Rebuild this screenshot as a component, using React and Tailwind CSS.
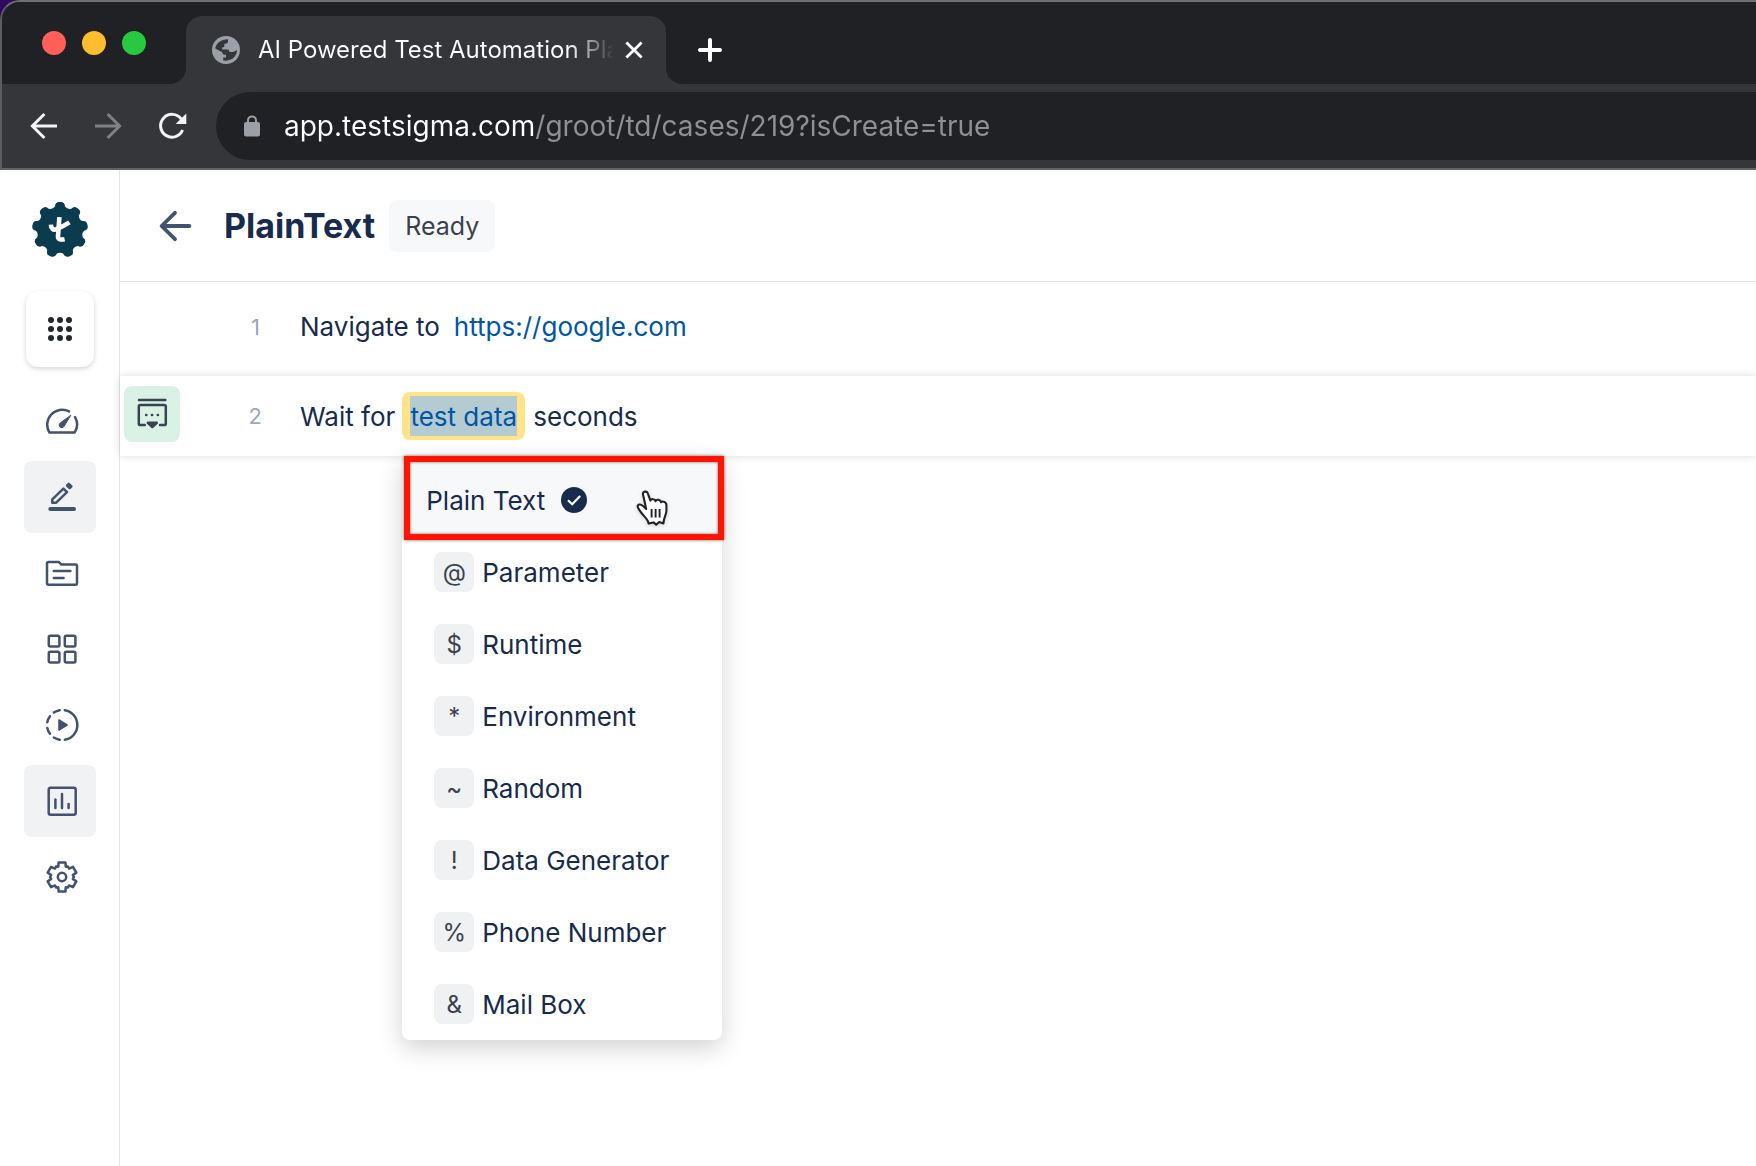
import React from "react";

const polar = (c, r, deg) => {
  const a = ((deg - 90) * Math.PI) / 180;
  return `${(c + r * Math.cos(a)).toFixed(2)} ${(c + r * Math.sin(a)).toFixed(2)}`;
};

// Nine round-tipped lobes joined by smooth valleys
const badgePath =
  "M" +
  Array.from({ length: 9 }, (_, i) => {
    const t = i * 40;
    return `${polar(28, 24, t - 12)} Q${polar(28, 28.6, t - 10)} ${polar(28, 28, t)} Q${polar(28, 28.6, t + 10)} ${polar(28, 24, t + 12)} Q${polar(28, 21.6, t + 20)} ${polar(28, 24, t + 28)}`;
  }).join("L") +
  "Z";

// Six-toothed gear outline
const gearPath =
  "M" +
  [0, 60, 120, 180, 240, 300]
    .flatMap((t) => [
      polar(18, 11, t - 20),
      polar(18, 15, t - 13),
      polar(18, 15, t + 13),
      polar(18, 11, t + 20),
      polar(18, 12, t + 30),
    ])
    .join("L") +
  "Z";

function Icon({ children, className = "" }) {
  return (
    <svg
      viewBox="0 0 36 36"
      className={`size-9 shrink-0 ${className}`}
      fill="none"
      stroke="currentColor"
      strokeWidth="2.5"
      strokeLinecap="round"
      strokeLinejoin="round"
      aria-hidden="true"
    >
      {children}
    </svg>
  );
}

const navItems = [
  {
    label: "Dashboard",
    icon: (
      <>
        <path d="M25 8.4A15 15 0 0 0 5.3 29.4H30.7A15 15 0 0 0 31 14" />
        <path d="M26.6 12.6 20 23.4a2.6 2.6 0 1 1-3.8-3.4z" fill="currentColor" strokeWidth="1" />
      </>
    ),
  },
  {
    label: "Create tests",
    active: true,
    icon: (
      <>
        <path d="M6.3 30H30" strokeWidth="4" />
        <path d="M8.3 23.8V20.4L19.4 9.6 23 13.1 11.9 23.8Z" />
        <path d="M24.8 4.8 27.4 7.3 25.7 9 23.1 6.5Z" fill="currentColor" />
      </>
    ),
  },
  {
    label: "Projects",
    icon: (
      <>
        <path d="M4.5 6.9H14.8L17.2 9.5H31.5Q33 9.5 33 11V28.3Q33 29.8 31.5 29.8H4.5Q3 29.8 3 28.3V8.4Q3 6.9 4.5 6.9Z" />
        <path d="M9.8 16H26.4M9.8 23H19.6" />
      </>
    ),
  },
  {
    label: "Add-ons",
    icon: (
      <>
        <rect x="4.8" y="4.8" width="10.6" height="10.6" rx="1.5" />
        <rect x="20.8" y="4.8" width="10.6" height="10.6" rx="1.5" />
        <rect x="4.8" y="20.8" width="10.6" height="10.6" rx="1.5" />
        <rect x="20.8" y="20.8" width="10.6" height="10.6" rx="1.5" />
      </>
    ),
  },
  {
    label: "Test plans",
    icon: (
      <>
        <path d="M20.8 3.2A15 15 0 0 1 20.8 32.8M15.7 3.2A15 15 0 0 0 9.8 5.5M6 9.2A15 15 0 0 0 3.3 15.2M3.3 21A15 15 0 0 0 6 26.8M9.8 30.5A15 15 0 0 0 15.7 32.8" />
        <path d="M15 13V23L23 18Z" fill="currentColor" strokeWidth="1.6" />
      </>
    ),
  },
  {
    label: "Reports",
    active: true,
    icon: (
      <>
        <rect x="4.7" y="4.7" width="27" height="27" rx="2" />
        <path d="M11.4 16.5V25M18 11V25M24.6 21V25" />
      </>
    ),
  },
  {
    label: "Settings",
    icon: (
      <>
        <path d={gearPath} />
        <circle cx="18" cy="18" r="4.2" />
      </>
    ),
  },
];

const dataTypes = [
  ["@", "Parameter"],
  ["$", "Runtime"],
  ["*", "Environment"],
  ["~", "Random"],
  ["!", "Data Generator"],
  ["%", "Phone Number"],
  ["&", "Mail Box"],
];

function BrowserChrome() {
  return (
    <div className="bg-[#2f0a5f]">
      <header className="overflow-hidden rounded-tl-[20px] border-y-2 border-l-2 border-t-[#6f7072] border-b-[#636468] border-l-[#5c5d60] bg-[#35363a]">
        <div className="flex h-[82px] items-stretch bg-[#35363a]">
          <div className="flex w-[184px] shrink-0 items-start gap-4 rounded-br-2xl bg-[#202124] pt-[29px] pl-10">
            <button aria-label="Close window" className="size-6 rounded-full bg-[#ff5f57]" />
            <button aria-label="Minimize window" className="size-6 rounded-full bg-[#febc2e]" />
            <button aria-label="Zoom window" className="size-6 rounded-full bg-[#28c840]" />
          </div>
          <div className="w-[480px] shrink-0 bg-[#202124]">
            <div className="h-[14px]" />
            <div className="flex h-[68px] items-center rounded-t-2xl bg-[#35363a] pl-[26px]">
              <svg viewBox="0 0 28 28" className="size-7 shrink-0" aria-hidden="true">
                <circle cx="14" cy="14" r="14" fill="#9aa0a6" />
                <path
                  d="M3.2 12.6C4 7.6 8.6 3.2 16 3.2V5.4C16 7 14.6 7.6 12.4 7.8V10C12.4 11 11.6 11.2 10.2 11.2V13.4H15.4C17 13.4 17.4 14.4 17.4 16H20C21.4 16 22.6 15.4 25 14C24.8 20.6 19.4 25.4 11.2 24.6V21.4H14V18.8C11.6 18.8 10.2 17.8 10.2 16.2Z"
                  fill="#35363a"
                />
              </svg>
              <span className="ml-[18px] w-[360px] bg-linear-to-r from-white from-[310px] to-transparent to-[356px] bg-clip-text text-2xl whitespace-nowrap text-transparent">
                AI Powered Test Automation Pla
              </span>
              <button aria-label="Close tab" className="ml-1.5 text-white">
                <svg viewBox="0 0 20 20" className="size-5" fill="none" stroke="currentColor" strokeWidth="2.8">
                  <path d="M2.4 2.4 17.6 17.6M17.6 2.4 2.4 17.6" />
                </svg>
              </button>
            </div>
          </div>
          <div className="flex flex-1 items-center rounded-bl-2xl bg-[#202124] pt-[14px] pl-8">
            <button aria-label="New tab" className="text-white">
              <svg viewBox="0 0 24 24" className="size-6" fill="none" stroke="currentColor" strokeWidth="4" strokeLinecap="round">
                <path d="M2 12H22M12 2V22" />
              </svg>
            </button>
          </div>
        </div>
        <div className="flex h-[84px] items-center pl-[27px]">
          <button aria-label="Back" className="text-[#f1f3f4]">
            <svg viewBox="0 0 30 30" className="size-[30px]" fill="none" stroke="currentColor" strokeWidth="3">
              <path d="M28 15H4M15.4 3 3.4 15l12 12" />
            </svg>
          </button>
          <button aria-label="Forward" className="ml-[34px] text-[#808184]">
            <svg viewBox="0 0 30 30" className="size-[30px]" fill="none" stroke="currentColor" strokeWidth="3">
              <path d="M2 15H26M14.6 3l12 12-12 12" />
            </svg>
          </button>
          <button aria-label="Reload" className="ml-[34px] text-[#f1f3f4]">
            <svg viewBox="0 0 30 30" className="size-[30px]" fill="none" stroke="currentColor" strokeWidth="3">
              <path d="M25.6 19A11.4 11.4 0 1 1 24.2 8" />
              <path d="M18.6 13H29.3V2.4Z" fill="currentColor" stroke="none" />
            </svg>
          </button>
          <div className="-mr-9 ml-[29px] flex h-[68px] flex-1 items-center rounded-full bg-[#202124] pl-7">
            <svg viewBox="0 0 16 22" className="h-[22px] w-4 shrink-0" aria-hidden="true">
              <rect y="7" width="16" height="14.5" rx="2" fill="#9aa0a6" />
              <path d="M4 8V5.4a4 4 0 0 1 8 0V8" fill="none" stroke="#9aa0a6" strokeWidth="2" />
            </svg>
            <input
              aria-label="Address"
              readOnly
              value="app.testsigma.com/groot/td/cases/219?isCreate=true"
              className="ml-6 flex-1 bg-linear-to-r from-white from-[251px] to-[#8f9092] to-[251px] bg-clip-text text-[28px] text-transparent outline-none"
            />
          </div>
        </div>
      </header>
    </div>
  );
}

function Sidebar() {
  return (
    <nav aria-label="Main" className="flex w-[120px] shrink-0 flex-col items-center border-r border-[#e6e7ea] pt-8">
      <a href="#home" aria-label="Home">
        <svg viewBox="0 0 56 56" className="size-14" aria-hidden="true">
          <path d={badgePath} fill="#0b3b4e" />
          <g fill="none" stroke="#fff" strokeWidth="4.6" strokeLinejoin="round">
            <path d="M27.4 15.2 26 34.4Q25.8 38.6 32.6 37.2" />
            <path d="M18.8 22.6Q19.4 29 24.4 27.2 31 24.6 37.4 20.4" />
          </g>
        </svg>
      </a>
      <button
        aria-label="Apps"
        className="mt-[33px] flex h-[76px] w-[68px] items-center justify-center rounded-xl bg-white shadow-[0_2px_5px_rgba(0,0,0,0.16)]"
      >
        <svg viewBox="0 0 24 24" className="size-6" fill="#22272f" aria-hidden="true">
          {[3, 12, 21].flatMap((y) => [3, 12, 21].map((x) => <circle key={`${x}-${y}`} cx={x} cy={y} r="3" />))}
        </svg>
      </button>
      <ul className="mt-[18px] flex flex-col gap-1">
        {navItems.map((item) => (
          <li key={item.label}>
            <button
              aria-label={item.label}
              className={`flex size-[72px] items-center justify-center rounded-lg pl-1 text-[#43526f] ${
                item.active ? "bg-[#f1f2f4]" : ""
              }`}
            >
              <Icon>{item.icon}</Icon>
            </button>
          </li>
        ))}
      </ul>
    </nav>
  );
}

function HandCursor() {
  return (
    <svg viewBox="0 0 34 38" className="absolute top-7 right-12 h-[38px] w-[34px] drop-shadow-sm" aria-hidden="true">
      <path
        d="M7 4.6C6.2 1.2 11 .4 12 3.8L14.4 10.6C14.8 8.6 19 8.6 19.6 11.2 20.4 9 24.4 9.4 25 12.2 26.4 10.8 30.4 11.8 30.4 15.2V21C30.4 24.6 27.6 27.6 27.4 33.4L23.2 32 20.2 34.6 17.6 32.4 12.6 33.6C12 28.6 7.4 26.4 3.6 20.4 1.6 17.6 1 15.6 2.4 14.8 4.4 13.8 6.6 15 10.2 19Z"
        fill="#fff"
        stroke="#222"
        strokeWidth="2.1"
        strokeLinejoin="round"
      />
      <path d="M15.6 19V27.4M19.6 19V27.4M23.6 19V27.4" stroke="#222" strokeWidth="1.9" />
    </svg>
  );
}

function DataTypeMenu() {
  return (
    <div
      role="menu"
      className="absolute top-full left-0 z-10 mt-4 w-80 rounded-lg bg-white text-[#172b4d] shadow-[0_8px_24px_rgba(0,0,0,0.18)]"
    >
      <div className="relative left-0.5 flex h-[84px] w-80 items-center border-6 border-[#ff1500] bg-[#f7f8fa] pt-1 shadow-[0_0_3px_rgba(0,0,0,0.6),inset_0_0_3px_rgba(0,0,0,0.6)]">
        <button role="menuitem" className="flex flex-1 items-center gap-4 pl-4">
          <span className="pt-0.5">Plain Text</span>
          <svg viewBox="0 0 26 26" className="size-[26px]" aria-hidden="true">
            <circle cx="13" cy="13" r="13" fill="#172b4d" />
            <path d="M7 13.2 11.2 17.2 19.2 9" fill="none" stroke="#fff" strokeWidth="2.2" />
          </svg>
        </button>
        <HandCursor />
      </div>
      <ul className="-mt-1">
        {dataTypes.map(([symbol, name]) => (
          <li key={name}>
            <button role="menuitem" className="flex h-[72px] w-full items-center gap-2 pl-8">
              <span className="flex size-10 items-center justify-center rounded-lg bg-[#eff1f3] pt-0.5 text-2xl text-[#3b424d]">
                {symbol}
              </span>
              <span className="pt-0.5">{name}</span>
            </button>
          </li>
        ))}
      </ul>
    </div>
  );
}

export default function App() {
  return (
    <div className="flex min-h-screen flex-col overflow-x-hidden bg-white font-['Inter',sans-serif] text-[26px] leading-8 text-[#172b4d]">
      <BrowserChrome />
      <div className="flex flex-1">
        <Sidebar />
        <main className="min-w-0 flex-1">
          <div className="flex h-28 items-center border-b border-[#e4e6ea] pl-[38px]">
            <a href="#back" aria-label="Back to test cases" className="text-[#43526f]">
              <Icon>
                <path d="M4 18H31.4M17 4.8 3.6 18 17 31.2" strokeWidth="3.8" />
              </Icon>
            </a>
            <h1 className="ml-[30px] text-[34px] font-bold text-[#172b4d]">PlainText</h1>
            <span className="ml-[14px] flex h-[52px] items-center rounded-lg bg-[#f7f8fa] px-4 text-[25px] text-[#3b424d]">
              Ready
            </span>
          </div>
          <ol>
            <li className="flex h-[94px] items-center pb-1">
              <span className="w-[60px] shrink-0" />
              <span className="w-[120px] pr-10 text-right text-[22px] text-[#9ba7ba]">1</span>
              <span>Navigate to</span>
              <a href="#url" className="ml-[14px] text-[#0055a5]">
                https://google.com
              </a>
            </li>
            <li className="relative flex h-20 items-center shadow-[0_0_8px_rgba(0,0,0,0.14)]">
              <button
                aria-label="Step details"
                className="mb-1 ml-1 flex size-14 shrink-0 items-center justify-center rounded-lg bg-[#daf2e5] text-[#3b4252]"
              >
                <Icon>
                  <path d="M5 4H31.4" />
                  <path d="M10.8 29H6.4Q4.8 29 4.8 27.4V10.6Q4.8 9 6.4 9H30.2Q31.8 9 31.8 10.6V27.4Q31.8 29 30.2 29H26" />
                  <path d="M12.2 19H12.3M18 19H18.1M23.8 19H23.9" strokeWidth="2.7" />
                  <path d="M13.8 26.8H22.8L18.3 31Z" fill="currentColor" />
                </Icon>
              </button>
              <span className="w-[120px] pr-[38px] text-right text-[22px] text-[#9ba7ba]">2</span>
              <span className="pt-0.5">Wait for</span>
              <div className="relative ml-[7px] rounded-lg bg-[#ffe588] px-2 py-1">
                <input
                  aria-label="Test data"
                  readOnly
                  value="test data"
                  className="block h-10 w-[107px] bg-[#b3cbd1] text-center text-[#0055a5] outline-none"
                />
                <DataTypeMenu />
              </div>
              <span className="ml-2 pt-0.5">seconds</span>
            </li>
          </ol>
        </main>
      </div>
    </div>
  );
}
